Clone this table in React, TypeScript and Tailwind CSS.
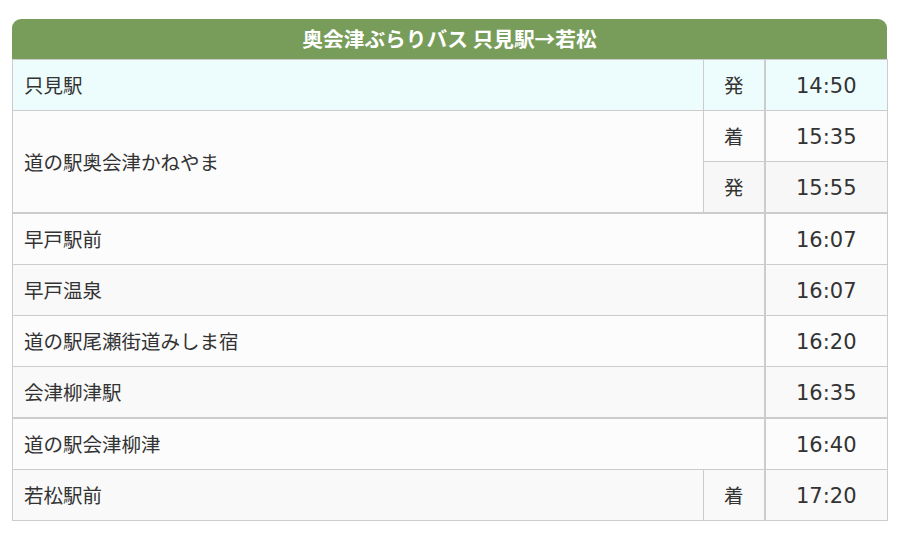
import React from 'react';

type Row = {
  name: string;
  times: { kind?: string; time: string }[];
  bg: string;
  thickTop?: boolean;
};

const rows: Row[] = [
  { name: '只見駅', times: [{ kind: '発', time: '14:50' }], bg: 'bg-[#edfdfe]' },
  {
    name: '道の駅奥会津かねやま',
    times: [
      { kind: '着', time: '15:35' },
      { kind: '発', time: '15:55' },
    ],
    bg: 'bg-[#fcfcfc]',
  },
  { name: '早戸駅前', times: [{ time: '16:07' }], bg: 'bg-[#fcfcfc]', thickTop: true },
  { name: '早戸温泉', times: [{ time: '16:07' }], bg: 'bg-[#f9f9f9]' },
  { name: '道の駅尾瀬街道みしま宿', times: [{ time: '16:20' }], bg: 'bg-[#fcfcfc]' },
  { name: '会津柳津駅', times: [{ time: '16:35' }], bg: 'bg-[#f9f9f9]' },
  { name: '道の駅会津柳津', times: [{ time: '16:40' }], bg: 'bg-[#fcfcfc]', thickTop: true },
  { name: '若松駅前', times: [{ kind: '着', time: '17:20' }], bg: 'bg-[#f9f9f9]' },
];

const font = { fontFamily: '"Noto Sans CJK JP", "Noto Sans", sans-serif' };
const timeFont = { fontFamily: '"DejaVu Sans", "Noto Sans CJK JP", sans-serif' };

export default function App() {
  return (
    <div className="w-[902px] h-[535px] bg-white pt-[19px] px-[12px]" style={font}>
      <div className="w-[875px]">
        <div className="h-[40px] rounded-t-[9px] bg-[#789d5a] flex items-center justify-center text-white text-[20.7px] font-bold">
          奥会津ぶらりバス 只見駅→若松
        </div>
        <table className="w-[875px] border-collapse table-fixed text-[#333]">
          <colgroup>
            <col className="w-[691px]" />
            <col className="w-[61px]" />
            <col className="w-[123px]" />
          </colgroup>
          <tbody>
            {rows.map((r, i) => {
              const top = r.thickTop ? 'border-t-2' : 'border-t';
              return r.times.map((t, j) => (
                <tr key={`${i}-${j}`} className={`${j === 1 ? 'bg-[#f7f7f7]' : r.bg} ${r.thickTop ? 'h-[52px]' : 'h-[51px]'}`}>
                  {j === 0 && (
                    <td
                      rowSpan={r.times.length}
                      colSpan={t.kind ? 1 : 2}
                      className={`${top} border-b border-l border-[#cccccc] pl-[11px] text-[19.5px] ${r.bg}`}
                    >
                      {r.name}
                    </td>
                  )}
                  {t.kind && (
                    <td className={`${j === 0 ? top : 'border-t'} border-b border-l border-[#cccccc] text-center text-[19.5px]`}>
                      {t.kind}
                    </td>
                  )}
                  <td
                    className={`${j === 0 ? top : 'border-t'} border-b border-l-2 border-r border-[#cccccc] text-center text-[21px] pt-[3px]`}
                    style={timeFont}
                  >
                    {t.time}
                  </td>
                </tr>
              ));
            })}
          </tbody>
        </table>
      </div>
    </div>
  );
}
